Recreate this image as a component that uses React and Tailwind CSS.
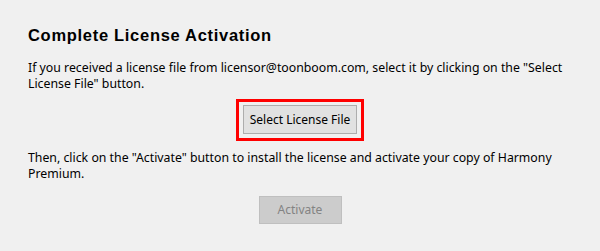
export default function App() {
  return (
    <div className="w-[600px] h-[251px] bg-[#f0f0f0] overflow-hidden pl-[28px] pr-[10px] pt-[25px] text-black" style={{ fontFamily: '"Noto Sans", "Liberation Sans", Arial, sans-serif' }}>
      <h1 className="text-[16.5px] leading-[20px] font-bold text-black tracking-[0.7px]" style={{ fontFamily: '"Liberation Sans", Arial, sans-serif' }}>Complete License Activation</h1>
      <p className="mt-[15px] text-[12.3px] leading-[16px] text-[#000]">
        If you received a license file from licensor@toonboom.com, select it by clicking on the "Select<br />
        License File" button.
      </p>
      <div className="mt-[7px] flex justify-center pr-[18px]">
        <div className="border-[3px] border-[#ff0000] px-[4px] pt-[3px] pb-[4px] flex">
          <button className="w-[114px] h-[29px] bg-[#e1e1e1] border border-[#adadad] text-[12px] text-black">
            Select License File
          </button>
        </div>
      </div>
      <p className="mt-[9px] text-[12.3px] leading-[16px]">
        Then, click on the "Activate" button to install the license and activate your copy of Harmony<br />
        Premium.
      </p>
      <div className="mt-[14px] flex justify-center pr-[18px]">
        <button className="w-[83px] h-[28px] bg-[#cccccc] border border-[#bfbfbf] text-[12px] text-[#838383]">
          Activate
        </button>
      </div>
    </div>
  );
}
